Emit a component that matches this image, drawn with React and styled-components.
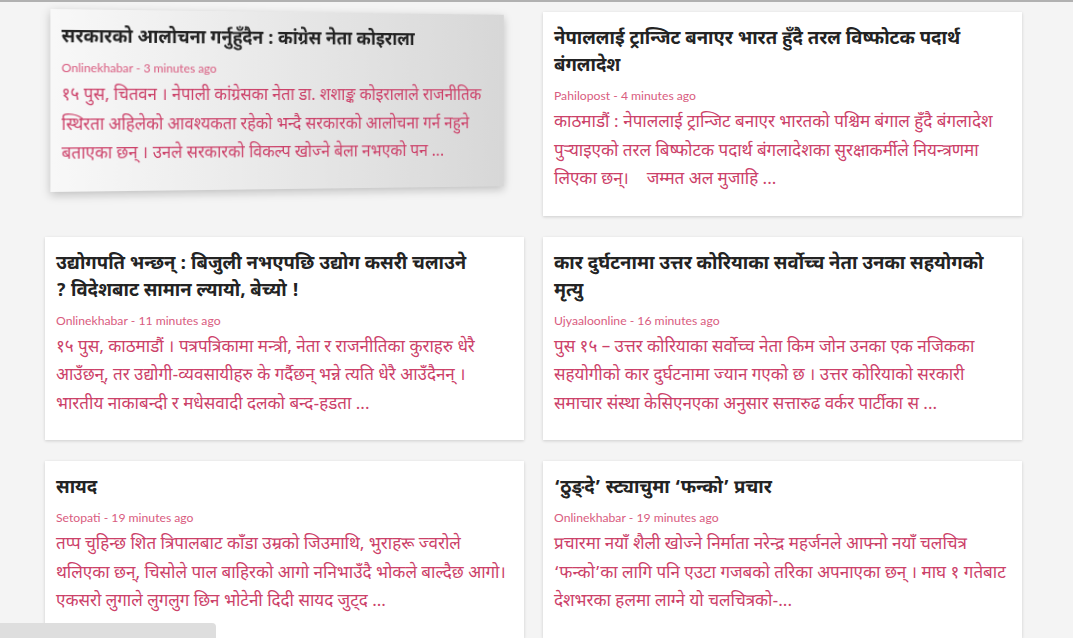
import React from "react";
import styled, { createGlobalStyle, css } from "styled-components";

const Global = createGlobalStyle`
  html, body { margin: 0; padding: 0; }
  body {
    background: #f4f4f4;
    border-top: 2px solid #b1b1b1;
    font-family: "Noto Sans Devanagari", "Lohit Devanagari", "Noto Sans", sans-serif;
    overflow: hidden;
  }
`;

const Page = styled.main`
  padding: 10px 0 0 45px;
`;

const Grid = styled.div`
  display: grid;
  grid-template-columns: 479px 479px;
  column-gap: 19px;
  row-gap: 21px;
  align-items: start;
`;

const Card = styled.article`
  background: #ffffff;
  box-shadow: 0 1px 3px rgba(0, 0, 0, 0.16);
  padding: 14px 11px 21px 11px;
  box-sizing: border-box;
  ${(p) =>
    p.$hovered &&
    css`
      background: linear-gradient(to right, #f8f8f8, #d7d7d7);
      box-shadow: 0 3px 9px rgba(0, 0, 0, 0.22);
      transform: perspective(2400px) rotateY(19deg);
    `}
`;

const Title = styled.h2`
  margin: 0;
  font-size: 18.5px;
  line-height: 27px;
  font-weight: 700;
  color: #232323;
`;

const Meta = styled.div`
  margin-top: 7px;
  font-family: "Lato", "Noto Sans", sans-serif;
  font-size: 12.2px;
  line-height: 18px;
  color: #d95c80;
`;

const Summary = styled.p`
  margin: 4px 0 0;
  font-size: 17px;
  line-height: 28.5px;
  color: #cc4169;
`;

const StatusBar = styled.div`
  position: fixed;
  left: 0;
  bottom: 0;
  width: 216px;
  height: 15px;
  background: #dedede;
  border-top-right-radius: 4px;
`;

const items = [
  {
    title: "सरकारको आलोचना गर्नुहुँदैन : कांग्रेस नेता कोइराला",
    source: "Onlinekhabar",
    time: "3 minutes ago",
    text: "१५ पुस, चितवन । नेपाली कांग्रेसका नेता डा. शशाङ्क कोइरालाले राजनीतिक स्थिरता अहिलेको आवश्यकता रहेको भन्दै सरकारको आलोचना गर्न नहुने बताएका छन् । उनले सरकारको विकल्प खोज्ने बेला नभएको पन ...",
    hovered: true,
  },
  {
    title: "नेपाललाई ट्रान्जिट बनाएर भारत हुँदै तरल विष्फोटक पदार्थ बंगलादेश",
    source: "Pahilopost",
    time: "4 minutes ago",
    text: "काठमाडौं : नेपाललाई ट्रान्जिट बनाएर भारतको पश्चिम बंगाल हुँदै बंगलादेश पुऱ्याइएको तरल बिष्फोटक पदार्थ बंगलादेशका सुरक्षाकर्मीले नियन्त्रणमा लिएका छन्। \u00a0\u00a0 जम्मत अल मुजाहि ...",
  },
  {
    title: "उद्योगपति भन्छन् : बिजुली नभएपछि उद्योग कसरी चलाउने ?\u00a0विदेशबाट सामान ल्यायो, बेच्यो !",
    source: "Onlinekhabar",
    time: "11 minutes ago",
    text: "१५ पुस, काठमाडौं । पत्रपत्रिकामा मन्त्री, नेता र राजनीतिका कुराहरु धेरै आउँछन्, तर उद्योगी-व्यवसायीहरु के गर्दैछन् भन्ने त्यति धेरै आउँदैनन् । भारतीय नाकाबन्दी र मधेसवादी दलको बन्द-हडता ...",
  },
  {
    title: "कार दुर्घटनामा उत्तर कोरियाका सर्वोच्च नेता उनका सहयोगको मृत्यु",
    source: "Ujyaaloonline",
    time: "16 minutes ago",
    text: "पुस १५ – उत्तर कोरियाका सर्वोच्च नेता किम जोन उनका एक नजिकका सहयोगीको कार दुर्घटनामा ज्यान गएको छ । उत्तर कोरियाको सरकारी समाचार संस्था केसिएनएका अनुसार सत्तारुढ वर्कर पार्टीका स ...",
  },
  {
    title: "सायद",
    source: "Setopati",
    time: "19 minutes ago",
    text: "तप्प चुहिन्छ शित त्रिपालबाट काँडा उम्रको जिउमाथि, भुराहरू ज्वरोले थलिएका छन्, चिसोले पाल बाहिरको आगो ननिभाउँदै भोकले बाल्दैछ आगो। एकसरो लुगाले लुगलुग छिन भोटेनी दिदी सायद जुट्द ...",
  },
  {
    title: "‘ठुङ्दे’ स्ट्याचुमा ‘फन्को’ प्रचार",
    source: "Onlinekhabar",
    time: "19 minutes ago",
    text: "प्रचारमा नयाँ शैली खोज्ने निर्माता नरेन्द्र महर्जनले आफ्नो नयाँ चलचित्र ‘फन्को’का लागि पनि एउटा गजबको तरिका अपनाएका छन् । माघ १ गतेबाट देशभरका हलमा लाग्ने यो चलचित्रको-...",
  },
];

export default function App() {
  return (
    <>
      <Global />
      <Page>
        <Grid>
          {items.map((it, i) => (
            <Card key={i} $hovered={it.hovered}>
              <Title>{it.title}</Title>
              <Meta>
                {it.source} - {it.time}
              </Meta>
              <Summary>{it.text}</Summary>
            </Card>
          ))}
        </Grid>
      </Page>
      <StatusBar />
    </>
  );
}
